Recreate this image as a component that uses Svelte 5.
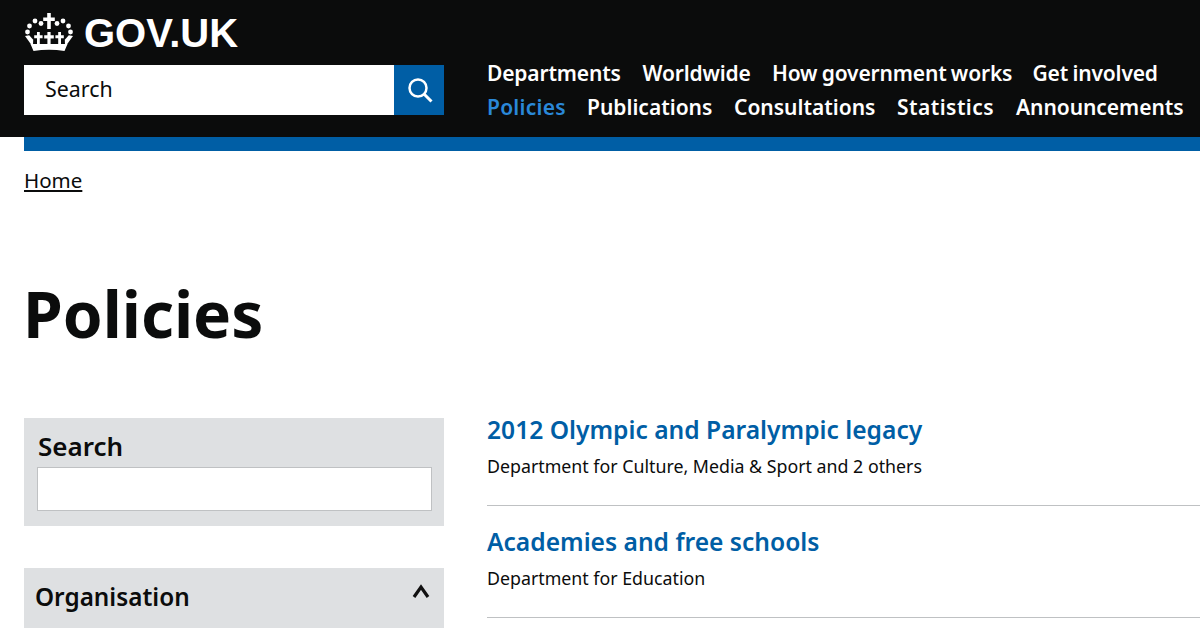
<script>
  const nav1 = [
    { label: 'Departments', width: 134 },
    { label: 'Worldwide', width: 108 },
    { label: 'How government works', width: 239 },
    { label: 'Get involved', width: 127 }
  ];
  const nav2 = [
    { label: 'Policies', width: 79, track: 0.25 },
    { label: 'Publications', width: 126, track: 0 },
    { label: 'Consultations', width: 142, track: 0 },
    { label: 'Statistics', width: 98, track: 0.45 },
    { label: 'Announcements', width: 167, track: -0.05 }
  ];
  const results = [
    { title: '2012 Olympic and Paralympic legacy', org: 'Department for Culture, Media & Sport and 2 others' },
    { title: 'Academies and free schools', org: 'Department for Education' }
  ];
</script>

<div class="page">
  <header class="header">
    <div class="brand">
      <svg class="crown" viewBox="0 0 50 38" width="50" height="38" aria-hidden="true">
        <g fill="#fff">
          <circle cx="3.500" cy="19" r="2.400"/><circle cx="5.500" cy="13" r="2.400"/><circle cx="11" cy="8" r="2.400"/><circle cx="17" cy="10.500" r="2.400"/>
          <circle cx="33" cy="10.500" r="2.400"/><circle cx="39" cy="8" r="2.400"/><circle cx="44.500" cy="13" r="2.400"/><circle cx="46.500" cy="19" r="2.400"/>
          <path d="M23.200 0h3.600v4.500h4v3.600h-4V16h-3.600V8.100h-4V4.500h4z"/>
          <path d="M23.400 19h3.200v3.200h3.200v3.200h-3.200V32h-3.200v-6.600h-3.200v-3.200h3.200z"/>
          <path d="M13 19h2.800v3.200h2.800v3h-2.800V32H13v-6.800h-2.800v-3H13z"/>
          <path d="M37 19h-2.800v3.200h-2.800v3h2.800V32H37v-6.800h2.800v-3H37z"/>
          <path d="M1 23l4.200-.8 4 4.500L9 32H7.500z"/>
          <path d="M49 23l-4.200-.8-4 4.500.2 5.300h1.500z"/>
          <path d="M6.500 31h37l-3 7q-15.500-2.500-31 0z"/>
        </g>
      </svg>
      <span class="wordmark">GOV.UK</span>
    </div>
    <div class="controls">
      <div class="site-search">
        <div class="search-field">Search</div>
        <div class="search-btn">
          <svg viewBox="0 0 26 26" width="26" height="26" aria-hidden="true">
            <circle cx="11" cy="11" r="8.500" fill="none" stroke="#fff" stroke-width="2.500"/>
            <path d="M17 17l7.500 7.500" stroke="#fff" stroke-width="3" fill="none"/>
          </svg>
        </div>
      </div>
      <nav class="nav">
        <div class="nav-row first">{#each nav1 as n}<span style:width="{n.width}px">{n.label}</span>{/each}</div>
        <div class="nav-row second">{#each nav2 as n, i}<span class:active={i === 0} style:width="{n.width}px" style:letter-spacing="{n.track}px">{n.label}</span>{/each}</div>
      </nav>
    </div>
  </header>
  <div class="bar"></div>
  <main class="main">
    <a class="crumb" href="#home">Home</a>
    <h1>Policies</h1>
    <div class="columns">
      <aside class="side">
        <div class="panel search-panel">
          <div class="panel-title">Search</div>
          <div class="panel-input"></div>
        </div>
        <div class="panel org-panel">
          <div class="org-title">Organisation</div>
          <svg class="caret" viewBox="0 0 18 14" width="18" height="14" aria-hidden="true"><path d="M2 13L9 3l7 10" fill="none" stroke="#111" stroke-width="3.200"/></svg>
        </div>
      </aside>
      <section class="list">
        {#each results as r}
          <article class="item">
            <h2>{r.title}</h2>
            <p>{r.org}</p>
          </article>
        {/each}
      </section>
    </div>
  </main>
</div>

<style>
  :global(body) { margin: 0; background: #fff; }
  .page { width: 1200px; height: 628px; overflow: hidden; font-family: "Noto Sans", sans-serif; color: #0b0c0c; }
  .header { background: #0b0c0c; height: 137px; padding: 0 0 0 24px; box-sizing: border-box; }
  .brand { display: flex; align-items: flex-start; height: 65px; }
  .crown { margin-top: 13px; }
  .wordmark { font-family: "Liberation Sans", sans-serif; font-weight: 700; font-size: 40px; line-height: 46px; margin: 10px 0 0 10px; color: #fff; }
  .controls { display: flex; }
  .site-search { display: flex; width: 420px; height: 50px; }
  .search-field { width: 370px; background: #fff; font-size: 21.400px; line-height: 48px; padding-left: 21px; box-sizing: border-box; }
  .search-btn { width: 50px; background: #005ea5; display: flex; align-items: center; justify-content: center; padding-left: 2px; box-sizing: border-box; }
  .nav { margin: -9px 0 0 43px; }
  .nav-row { display: flex; gap: 21.500px; white-space: nowrap; color: #fff; font-size: 21px; font-weight: 600; line-height: 34px; }
  .nav-row span { flex: none; }
  .first { letter-spacing: -0.150px; word-spacing: -1px; }
  .second { gap: 21px; }
  .active { color: #2a88d8; }
  .bar { height: 14px; margin-left: 24px; background: #005ea5; }
  .main { padding: 0 0 0 24px; }
  .crumb { display: inline-block; margin-top: 15px; font-size: 20.500px; line-height: 28px; color: #0b0c0c; text-decoration: underline; }
  h1 { margin: 81px 0 0 -1px; font-size: 64px; font-weight: 700; line-height: 78px; }
  .columns { display: flex; margin-top: 65px; gap: 43px; }
  .side { width: 420px; flex: none; }
  .panel { background: #dee0e2; }
  .search-panel { height: 108px; padding: 12px 13px 0; box-sizing: border-box; }
  .panel-title { font-size: 26px; font-weight: 600; line-height: 32px; padding-left: 1px; }
  .panel-input { height: 42px; margin-top: 5px; background: #fff; border: 1px solid #bfc1c3; width: 393px; }
  .org-panel { margin-top: 42px; height: 60px; display: flex; justify-content: space-between; padding: 13px 14px 0 11px; box-sizing: border-box; }
  .org-title { font-size: 24.300px; font-weight: 600; line-height: 32px; }
  .caret { margin-top: 3px; }
  .list { flex: 1; }
  .item { padding-top: 24px; height: 112px; border-bottom: 1px solid #bfc1c3; box-sizing: border-box; }
  .item:first-child { padding-top: 0; height: 88px; }
  .item h2 { margin: 0; color: #005ea5; font-size: 24.600px; font-weight: 600; line-height: 24px; }
  .item p { margin: 12.500px 0 0; font-size: 17.800px; line-height: 23px; }
</style>
